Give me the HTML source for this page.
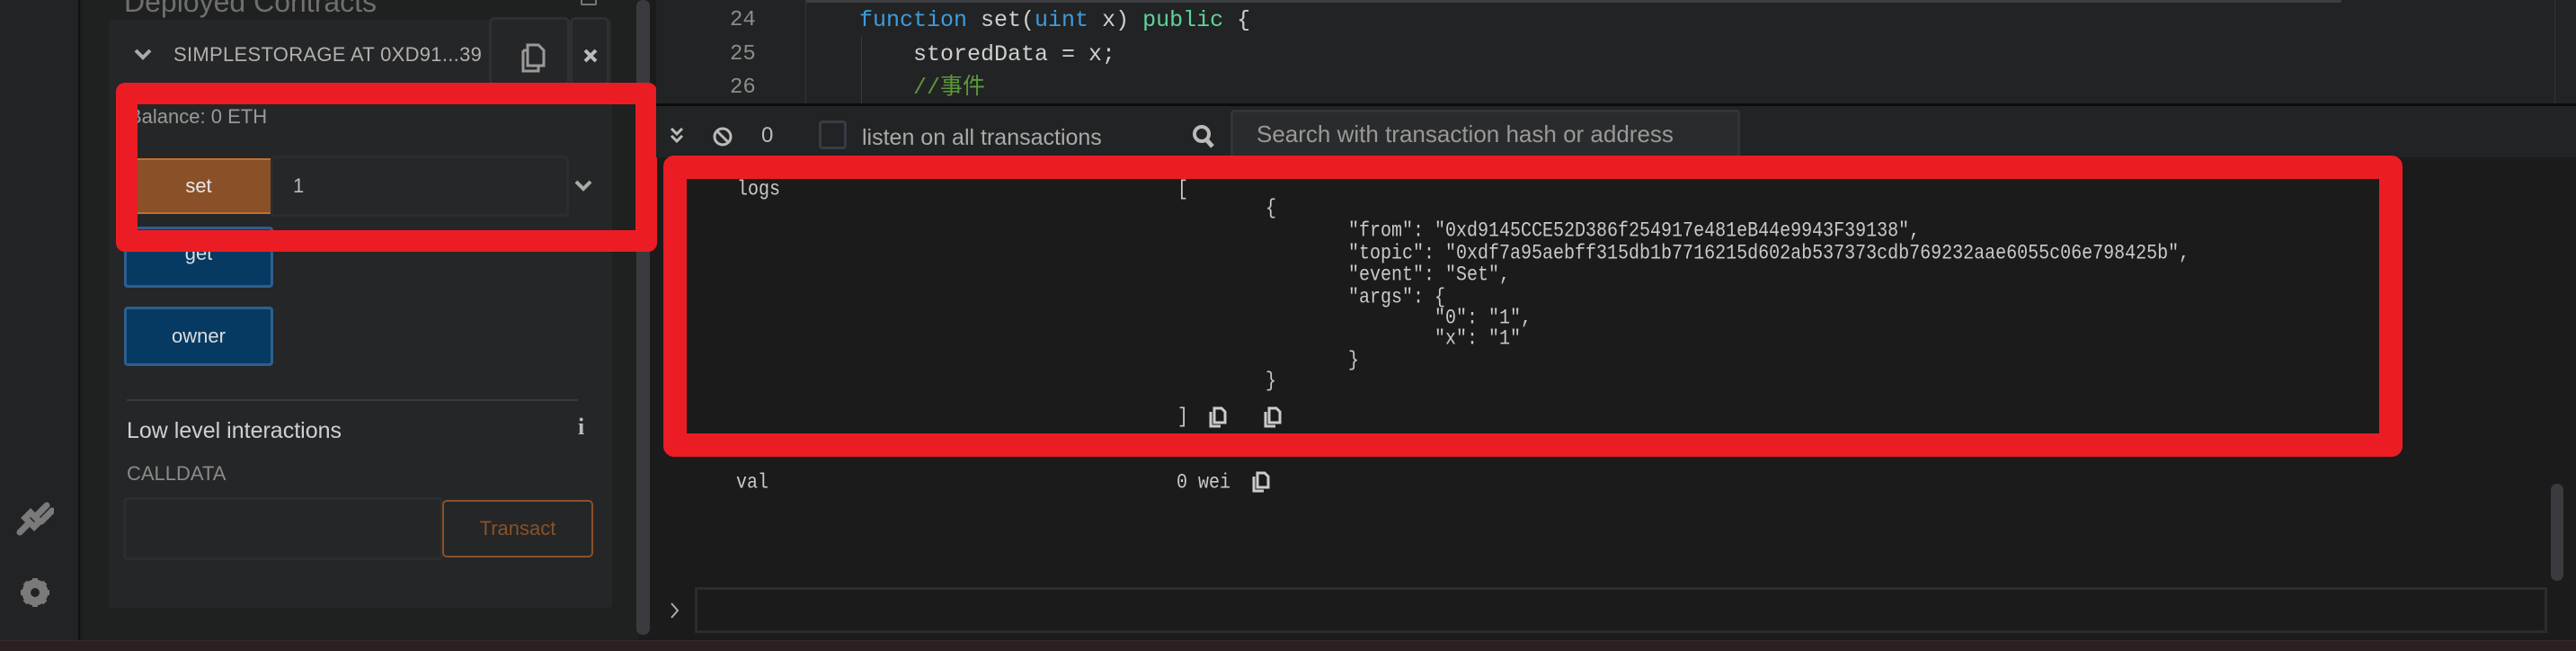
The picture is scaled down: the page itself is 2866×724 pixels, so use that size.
<!DOCTYPE html>
<html><head><meta charset="utf-8"><style>
*{margin:0;padding:0;box-sizing:border-box}
body{width:2866px;height:724px;overflow:hidden;background:#1b1b1b;position:relative;font-family:"Liberation Sans","Noto Sans CJK SC",sans-serif}
.a{position:absolute}
.mono{font-family:"Liberation Mono","Noto Sans CJK SC",monospace}
.log{position:absolute;font-family:"Liberation Mono",monospace;font-size:20px;line-height:24px;color:#c9c9c9;white-space:pre;transform:scaleY(1.15);transform-origin:left center}
</style></head><body>
<!-- left icon bar -->
<div class="a" style="left:0;top:0;width:89px;height:712px;background:#222324;border-right:2px solid #111"></div>
<svg class="a" style="left:18px;top:552px" width="42" height="44" viewBox="0 0 42 44"><path d="M4 40 L14 30 M10 24 L20 34 L26 28 L16 18 Z M22 22 L34 10 M28 28 L40 16" stroke="#7a7a7a" stroke-width="7" fill="none" stroke-linecap="round"/></svg>
<svg class="a" style="left:22px;top:642px" width="34" height="34" viewBox="0 0 34 34"><circle cx="17" cy="17" r="11" fill="none" stroke="#7a7a7a" stroke-width="7"/><g stroke="#7a7a7a" stroke-width="6"><path d="M17 1V33M1 17H33M5.7 5.7L28.3 28.3M28.3 5.7L5.7 28.3"/></g><circle cx="17" cy="17" r="5" fill="#222324"/></svg>
<!-- side panel -->
<div class="a" style="left:91px;top:0;width:620px;height:712px;background:#1f2020"></div>
<div class="a" style="left:138px;top:-16px;font-size:32px;color:#6f6f6f">Deployed Contracts</div>
<div class="a" style="left:646px;top:-6px;width:18px;height:12px;border:2px solid #777;border-radius:2px"></div>
<div class="a" style="left:121px;top:22px;width:560px;height:654px;background:#252627;border-radius:4px"></div>
<div class="a" style="left:544px;top:19px;width:90px;height:76px;border:3px solid #2f3031;border-radius:6px"></div>
<div class="a" style="left:634px;top:19px;width:44px;height:76px;border:3px solid #2f3031;border-radius:6px"></div>
<svg class="a" style="left:148px;top:52px" width="22" height="16"><path d="M3 4 L11 12 L19 4" stroke="#aaa" stroke-width="4" fill="none"/></svg>
<div class="a" style="left:193px;top:48px;font-size:22px;color:#b0b0b0;letter-spacing:0.3px">SIMPLESTORAGE AT 0XD91...39</div>
<svg class="a" style="left:577px;top:47px" width="30" height="34" viewBox="0 0 30 34"><path d="M10 3H22L28 9V26H10Z M5 9H10 M5 9V32H22V26" stroke="#9a9a9a" stroke-width="3" fill="none"/></svg>
<svg class="a" style="left:648px;top:53px" width="18" height="18"><path d="M3 3L15 15M15 3L3 15" stroke="#bbb" stroke-width="4"/></svg>
<div class="a" style="left:143px;top:117px;font-size:22px;color:#9a9a9a">Balance: 0 ETH</div>
<div class="a" style="left:141px;top:176px;width:160px;height:62px;background:#8a5128;border-top:2px solid #c07030;border-bottom:2px solid #c07030;color:#e8e8e8;font-size:22px;text-align:center;line-height:58px">set</div>
<div class="a" style="left:301px;top:173px;width:332px;height:68px;background:#262728;border:3px solid #2c2d2e;border-radius:4px;color:#bbb;font-size:22px;line-height:62px;padding-left:22px">1</div>
<svg class="a" style="left:638px;top:198px" width="22" height="16"><path d="M3 4 L11 12 L19 4" stroke="#aaa" stroke-width="4" fill="none"/></svg>
<div class="a" style="left:138px;top:252px;width:166px;height:68px;background:#073a63;border:3px solid #2d5f8f;border-radius:4px;color:#ddd;font-size:22px;text-align:center;line-height:54px">get</div>
<div class="a" style="left:138px;top:341px;width:166px;height:66px;background:#073a63;border:3px solid #2d5f8f;border-radius:4px;color:#ddd;font-size:22px;text-align:center;line-height:60px">owner</div>
<div class="a" style="left:141px;top:444px;width:502px;height:2px;background:#3a3b3c"></div>
<div class="a" style="left:141px;top:465px;font-size:25px;color:#d0d0d0">Low level interactions</div>
<div class="a" style="left:643px;top:460px;font-size:26px;color:#bbb;font-weight:bold;font-family:'Liberation Serif',serif">i</div>
<div class="a" style="left:141px;top:514px;font-size:22px;color:#8a8a8a">CALLDATA</div>
<div class="a" style="left:137px;top:553px;width:356px;height:70px;background:#252627;border:3px solid #2c2d2e;border-radius:5px"></div>
<div class="a" style="left:492px;top:556px;width:168px;height:64px;border:2px solid #8a5128;border-radius:5px;color:#8a5128;font-size:22px;text-align:center;line-height:60px">Transact</div>
<div class="a" style="left:708px;top:0;width:15px;height:706px;background:#3a3b3f;border-radius:7px"></div>
<!-- red box 1 -->
<div class="a" style="left:129px;top:92px;width:602px;height:188px;border:24px solid #ec1c24;border-radius:10px"></div>
<!-- editor -->
<div class="a" style="left:730px;top:0;width:2136px;height:115px;background:#222324"></div>
<div class="a" style="left:896px;top:0;width:1709px;height:3px;background:#3c3d40"></div>
<div class="a" style="left:896px;top:0;width:1px;height:115px;background:#333"></div>
<div class="a" style="left:958px;top:40px;width:1px;height:75px;background:#3a3a3a"></div>
<div class="a" style="left:2842px;top:0;width:1px;height:115px;background:#333"></div>
<div class="a mono" style="left:812px;top:4px;font-size:24px;line-height:37.5px;color:#8c8c8c">24<br>25<br>26</div>
<div class="a mono" style="left:956px;top:4px;font-size:25px;line-height:37.5px;color:#cfcfcf;white-space:pre"><span style="color:#3e9cdd">function</span> set(<span style="color:#3e9cdd">uint</span> x) <span style="color:#5fd39a">public</span> {
    storedData = x;
    <span style="color:#5a9a3a">//事件</span></div>
<div class="a" style="left:730px;top:115px;width:2136px;height:3px;background:#0c0c0c"></div>
<!-- toolbar -->
<div class="a" style="left:730px;top:118px;width:2136px;height:57px;background:#222324"></div>
<svg class="a" style="left:744px;top:140px" width="18" height="22"><path d="M3 3L9 9L15 3M3 11L9 17L15 11" stroke="#bbb" stroke-width="3" fill="none"/></svg>
<svg class="a" style="left:792px;top:140px" width="24" height="24"><circle cx="12" cy="12" r="9" stroke="#bbb" stroke-width="3" fill="none"/><path d="M6 6L18 18" stroke="#bbb" stroke-width="3"/></svg>
<div class="a" style="left:847px;top:137px;font-size:24px;color:#bbb">0</div>
<div class="a" style="left:911px;top:134px;width:31px;height:32px;border:3px solid #3a3b44;border-radius:4px;background:#222326"></div>
<div class="a" style="left:959px;top:139px;font-size:25px;color:#aaa">listen on all transactions</div>
<svg class="a" style="left:1326px;top:138px" width="26" height="28"><circle cx="11" cy="11" r="8" stroke="#bbb" stroke-width="4" fill="none"/><path d="M16 17L23 25" stroke="#bbb" stroke-width="5"/></svg>
<div class="a" style="left:1369px;top:122px;width:567px;height:54px;background:#2a2b2c;border:3px solid #333436;border-radius:4px;color:#999;font-size:26px;line-height:48px;padding-left:26px">Search with transaction hash or address</div>
<!-- logs -->
<div class="log" style="left:820px;top:200px">logs</div>
<div class="log" style="left:1310px;top:200px">[</div>
<div class="log" style="left:1408px;top:221px">{</div>
<div class="log" style="left:1500px;top:246px">"from": "0xd9145CCE52D386f254917e481eB44e9943F39138",</div>
<div class="log" style="left:1500px;top:271px">"topic": "0xdf7a95aebff315db1b7716215d602ab537373cdb769232aae6055c06e798425b",</div>
<div class="log" style="left:1500px;top:295px">"event": "Set",</div>
<div class="log" style="left:1500px;top:320px">"args": {</div>
<div class="log" style="left:1596px;top:343px">"0": "1",</div>
<div class="log" style="left:1596px;top:366px">"x": "1"</div>
<div class="log" style="left:1500px;top:390px">}</div>
<div class="log" style="left:1408px;top:413px">}</div>
<div class="log" style="left:1310px;top:453px">]</div>
<svg class="a" style="left:1344px;top:452px" width="22" height="24"><path d="M7 2H15L19 6V18H7Z M3 6V22H14" stroke="#ccc" stroke-width="3" fill="none"/></svg>
<svg class="a" style="left:1405px;top:452px" width="22" height="24"><path d="M7 2H15L19 6V18H7Z M3 6V22H14" stroke="#ccc" stroke-width="3" fill="none"/></svg>
<div class="log" style="left:819px;top:526px">val</div>
<div class="log" style="left:1309px;top:526px">0 wei</div>
<svg class="a" style="left:1392px;top:524px" width="22" height="24"><path d="M7 2H15L19 6V18H7Z M3 6V22H14" stroke="#ccc" stroke-width="3" fill="none"/></svg>
<!-- red box 2 -->
<div class="a" style="left:738px;top:173px;width:1935px;height:335px;border:26px solid #ec1c24;border-radius:12px"></div>
<div class="a" style="left:2838px;top:538px;width:14px;height:108px;background:#3a3b3f;border-radius:7px"></div>
<svg class="a" style="left:744px;top:668px" width="14" height="22"><path d="M3 3L10 11L3 19" stroke="#aaa" stroke-width="2" fill="none"/></svg>
<div class="a" style="left:773px;top:653px;width:2061px;height:51px;border:3px solid #2b2c2e;background:#1b1b1b"></div>
<div class="a" style="left:0;top:712px;width:2866px;height:12px;background:#2b2020;border-top:1px solid #3a2a2a"></div>
</body></html>
